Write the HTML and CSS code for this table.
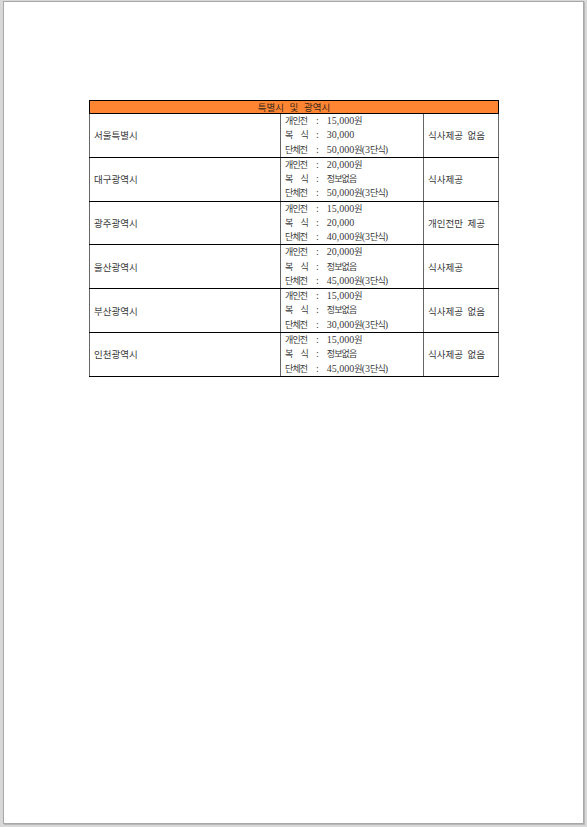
FILE: index.html
```html
<!DOCTYPE html>
<html lang="ko">
<head>
<meta charset="utf-8">
<link rel="stylesheet" href="styles.css">
</head>
<body>
<div class="page">
  <table class="meal">
    <thead>
      <tr><th colspan="3">특별시 및 광역시</th></tr>
    </thead>
    <tbody>
      <tr>
        <td class="city">서울특별시</td>
        <td class="fees">
          <div><span class="lbl">개인전</span><span class="colon">:</span><span class="num">15,000</span>원</div>
          <div><span class="lbl sp"><i>복</i><i>식</i></span><span class="colon">:</span><span class="num">30,000</span></div>
          <div><span class="lbl">단체전</span><span class="colon">:</span><span class="num">50,000</span>원<span class="num">(3</span>단식<span class="num">)</span></div>
        </td>
        <td class="meal-info">식사제공 없음</td>
      </tr>
      <tr>
        <td class="city">대구광역시</td>
        <td class="fees">
          <div><span class="lbl">개인전</span><span class="colon">:</span><span class="num">20,000</span>원</div>
          <div><span class="lbl sp"><i>복</i><i>식</i></span><span class="colon">:</span>정보없음</div>
          <div><span class="lbl">단체전</span><span class="colon">:</span><span class="num">50,000</span>원<span class="num">(3</span>단식<span class="num">)</span></div>
        </td>
        <td class="meal-info">식사제공</td>
      </tr>
      <tr>
        <td class="city">광주광역시</td>
        <td class="fees">
          <div><span class="lbl">개인전</span><span class="colon">:</span><span class="num">15,000</span>원</div>
          <div><span class="lbl sp"><i>복</i><i>식</i></span><span class="colon">:</span><span class="num">20,000</span></div>
          <div><span class="lbl">단체전</span><span class="colon">:</span><span class="num">40,000</span>원<span class="num">(3</span>단식<span class="num">)</span></div>
        </td>
        <td class="meal-info">개인전만 제공</td>
      </tr>
      <tr>
        <td class="city">울산광역시</td>
        <td class="fees">
          <div><span class="lbl">개인전</span><span class="colon">:</span><span class="num">20,000</span>원</div>
          <div><span class="lbl sp"><i>복</i><i>식</i></span><span class="colon">:</span>정보없음</div>
          <div><span class="lbl">단체전</span><span class="colon">:</span><span class="num">45,000</span>원<span class="num">(3</span>단식<span class="num">)</span></div>
        </td>
        <td class="meal-info">식사제공</td>
      </tr>
      <tr>
        <td class="city">부산광역시</td>
        <td class="fees">
          <div><span class="lbl">개인전</span><span class="colon">:</span><span class="num">15,000</span>원</div>
          <div><span class="lbl sp"><i>복</i><i>식</i></span><span class="colon">:</span>정보없음</div>
          <div><span class="lbl">단체전</span><span class="colon">:</span><span class="num">30,000</span>원<span class="num">(3</span>단식<span class="num">)</span></div>
        </td>
        <td class="meal-info">식사제공 없음</td>
      </tr>
      <tr>
        <td class="city">인천광역시</td>
        <td class="fees">
          <div><span class="lbl">개인전</span><span class="colon">:</span><span class="num">15,000</span>원</div>
          <div><span class="lbl sp"><i>복</i><i>식</i></span><span class="colon">:</span>정보없음</div>
          <div><span class="lbl">단체전</span><span class="colon">:</span><span class="num">45,000</span>원<span class="num">(3</span>단식<span class="num">)</span></div>
        </td>
        <td class="meal-info">식사제공 없음</td>
      </tr>
    </tbody>
  </table>
</div>
</body>
</html>
```
FILE: styles.css
```css
html, body {
  margin: 0;
  padding: 0;
}
body {
  background: #d8d8d8;
  width: 587px;
  height: 827px;
  overflow: hidden;
  font-family: "Noto Sans CJK KR", "Noto Sans", sans-serif;
  color: #3a3a3a;
}
.page {
  box-sizing: border-box;
  margin: 1px 0 0 3px;
  width: 581px;
  height: 823px;
  background: #fff;
  border: 1px solid #a8a8a8;
  box-shadow: 1px 1px 0 #b8b8b8;
  padding: 98px 0 0 85px;
}
.meal {
  border-collapse: collapse;
  width: 410px;
  font-size: 9.5px;
  border: 1px solid #000;
}
.meal th {
  background: #ff8533;
  color: #3a2a1a;
  font-weight: normal;
  height: 12px;
  padding: 0;
  line-height: 12px;
  border: 1px solid #000;
  text-align: center;
  word-spacing: 3px;
}
.meal td {
  border-top: 1px solid #000;
  border-bottom: 1px solid #000;
  border-left: 1px solid #666;
  border-right: 1px solid #666;
  padding: 0 4px;
  vertical-align: middle;
}
.meal td.city {
  width: 182px;
}
.meal td.fees {
  width: 134px;
  font-size: 9px;
  letter-spacing: -0.9px;
  line-height: 14.28px;
  padding: 0 4px;
  white-space: nowrap;
}
.meal td.fees div {
  height: 14.28px;
}
.meal td.meal-info {
  word-spacing: 2px;
}
.lbl {
  display: inline-block;
  width: 23px;
}
.lbl.sp {
  display: inline-flex;
  justify-content: space-between;
}
.lbl i {
  font-style: normal;
}
.colon {
  font-family: "Liberation Serif", serif;
  font-size: 10px;
  letter-spacing: 0;
  margin: 0 8px 0 8px;
}
.num {
  font-family: "Liberation Serif", serif;
  font-size: 10px;
  letter-spacing: 0;
}
```
